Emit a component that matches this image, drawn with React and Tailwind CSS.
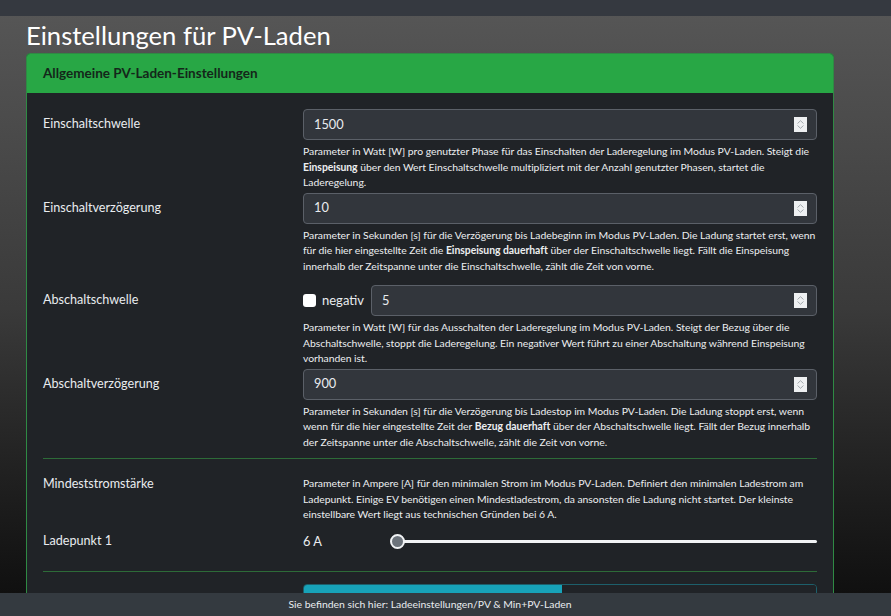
import React from 'react';

const font = { fontFamily: 'Lato, "Open Sans", sans-serif' };

function Spinner() {
  return (
    <div className="w-[13px] h-[15px] bg-[#eef0f2] flex flex-col items-center justify-center gap-[1px]">
      <svg width="7" height="4" viewBox="0 0 7 4"><path d="M0.5 3.5 L3.5 0.7 L6.5 3.5" fill="none" stroke="#9aa0a6" strokeWidth="0.9" /></svg>
      <svg width="7" height="4" viewBox="0 0 7 4"><path d="M0.5 0.5 L3.5 3.3 L6.5 0.5" fill="none" stroke="#9aa0a6" strokeWidth="0.9" /></svg>
    </div>
  );
}

function NumberInput({ value, className = '' }) {
  return (
    <div className={`h-[31px] flex items-center justify-between pl-[10px] pr-[9px] bg-[#32363c] border border-[#5b6068] rounded-[4px] ${className}`}>
      <span className="text-[12.8px] text-[#e9ecef]">{value}</span>
      <Spinner />
    </div>
  );
}

function Help({ lines }) {
  return (
    <div className="mt-[4px] text-[10.4px] tracking-[-0.03px] leading-[15.5px] text-[#eceef0]">
      {lines.map((l, i) => (
        <div key={i} className="whitespace-nowrap">{l}</div>
      ))}
    </div>
  );
}

function Row({ label, children }) {
  return (
    <div className="grid grid-cols-[260px_minmax(0,1fr)]">
      <div className="text-[12.6px] text-[#e9ecef] h-[31px] flex items-center">{label}</div>
      <div className="min-w-0">{children}</div>
    </div>
  );
}

export default function App() {
  return (
    <div style={font} className="h-[616px] w-[891px] flex flex-col overflow-hidden bg-gradient-to-b from-[#575757] via-[#3a3a3a] to-[#0d0d0d]">
      {/* top nav, mostly scrolled away */}
      <div className="h-[16px] bg-[#353940] shrink-0" />

      <div className="flex-1 overflow-hidden px-[26px]">
        <h1 className="mt-[1px] text-[25.6px] leading-[36px] text-white w-[807px]">Einstellungen für PV-Laden</h1>

        <div className="w-[808px] border border-[#2f8a44] rounded-t-[4px] bg-[#202327]">
          <div className="h-[39px] bg-[#28a745] flex items-center px-[16px] rounded-t-[3px]">
            <span className="text-[13.5px] font-bold text-[#14261a]">Allgemeine PV-Laden-Einstellungen</span>
          </div>

          <div className="px-[16px] pt-[16px]">
            <div className="flex flex-col gap-[2px]">
              <Row label="Einschaltschwelle">
                <NumberInput value="1500" />
                <Help lines={[
                  'Parameter in Watt [W] pro genutzter Phase für das Einschalten der Laderegelung im Modus PV-Laden. Steigt die',
                  <span key="a"><b>Einspeisung</b> über den Wert Einschaltschwelle multipliziert mit der Anzahl genutzter Phasen, startet die</span>,
                  'Laderegelung.',
                ]} />
              </Row>

              <Row label="Einschaltverzögerung">
                <NumberInput value="10" />
                <Help lines={[
                  'Parameter in Sekunden [s] für die Verzögerung bis Ladebeginn im Modus PV-Laden. Die Ladung startet erst, wenn',
                  <span key="b">für die hier eingestellte Zeit die <b>Einspeisung dauerhaft</b> über der Einschaltschwelle liegt. Fällt die Einspeisung</span>,
                  'innerhalb der Zeitspanne unter die Einschaltschwelle, zählt die Zeit von vorne.',
                ]} />
              </Row>

              <div className="mt-[9px]">
                <Row label="Abschaltschwelle">
                  <div className="flex items-center">
                    <div className="w-[13px] h-[13px] bg-white rounded-[3px]" />
                    <span className="ml-[6px] text-[13px] text-[#e9ecef]">negativ</span>
                    <NumberInput value="5" className="flex-1 ml-[7px]" />
                  </div>
                  <Help lines={[
                    'Parameter in Watt [W] für das Ausschalten der Laderegelung im Modus PV-Laden. Steigt der Bezug über die',
                    'Abschaltschwelle, stoppt die Laderegelung. Ein negativer Wert führt zu einer Abschaltung während Einspeisung',
                    'vorhanden ist.',
                  ]} />
                </Row>
              </div>

              <Row label="Abschaltverzögerung">
                <NumberInput value="900" />
                <Help lines={[
                  'Parameter in Sekunden [s] für die Verzögerung bis Ladestop im Modus PV-Laden. Die Ladung stoppt erst, wenn',
                  <span key="c">wenn für die hier eingestellte Zeit der <b>Bezug dauerhaft</b> über der Abschaltschwelle liegt. Fällt der Bezug innerhalb</span>,
                  'der Zeitspanne unter die Abschaltschwelle, zählt die Zeit von vorne.',
                ]} />
              </Row>
            </div>

            <hr className="mt-[8px] border-0 border-t border-[#2d6b38]" />

            <div className="grid grid-cols-[260px_minmax(0,1fr)] pt-[17px]">
              <div className="text-[12.6px] text-[#e9ecef] leading-[15.5px]">Mindeststromstärke</div>
              <div className="text-[10.4px] tracking-[-0.03px] leading-[15.5px] text-[#eceef0]">
                <div className="whitespace-nowrap">Parameter in Ampere [A] für den minimalen Strom im Modus PV-Laden. Definiert den minimalen Ladestrom am</div>
                <div className="whitespace-nowrap">Ladepunkt. Einige EV benötigen einen Mindestladestrom, da ansonsten die Ladung nicht startet. Der kleinste</div>
                <div className="whitespace-nowrap">einstellbare Wert liegt aus technischen Gründen bei 6 A.</div>
              </div>
            </div>

            <div className="grid grid-cols-[260px_minmax(0,1fr)] mt-[4px] h-[30px] items-center">
              <div className="text-[12.6px] text-[#e9ecef]">Ladepunkt 1</div>
              <div className="flex items-center">
                <span className="w-[87px] text-[12.8px] text-[#e9ecef]">6 A</span>
                <div className="flex-1 relative h-[16px] flex items-center">
                  <div className="w-full h-[3px] bg-[#f1f3f5] rounded-full ml-[6px]" />
                  <div className="absolute left-0 top-0 w-[15px] h-[15px] rounded-full bg-[#6c737b] border-2 border-[#f1f3f5]" />
                </div>
              </div>
            </div>

            <hr className="mt-[14px] border-0 border-t border-[#2d6b38]" />

            <div className="grid grid-cols-[260px_minmax(0,1fr)] pt-[12px]">
              <div />
              <div className="flex h-[34px] border border-[#1d5f6b] rounded-t-[4px] overflow-hidden">
                <div className="w-[258px] bg-[#17a2b8]" />
                <div className="flex-1 bg-[#202327]" />
              </div>
            </div>
          </div>
        </div>
      </div>

      <div className="h-[23px] shrink-0 bg-[#343a40] flex items-center justify-center pr-[31px]">
        <span className="text-[10.4px] text-[#e9ecef]">Sie befinden sich hier: Ladeeinstellungen/PV &amp; Min+PV-Laden</span>
      </div>
    </div>
  );
}
